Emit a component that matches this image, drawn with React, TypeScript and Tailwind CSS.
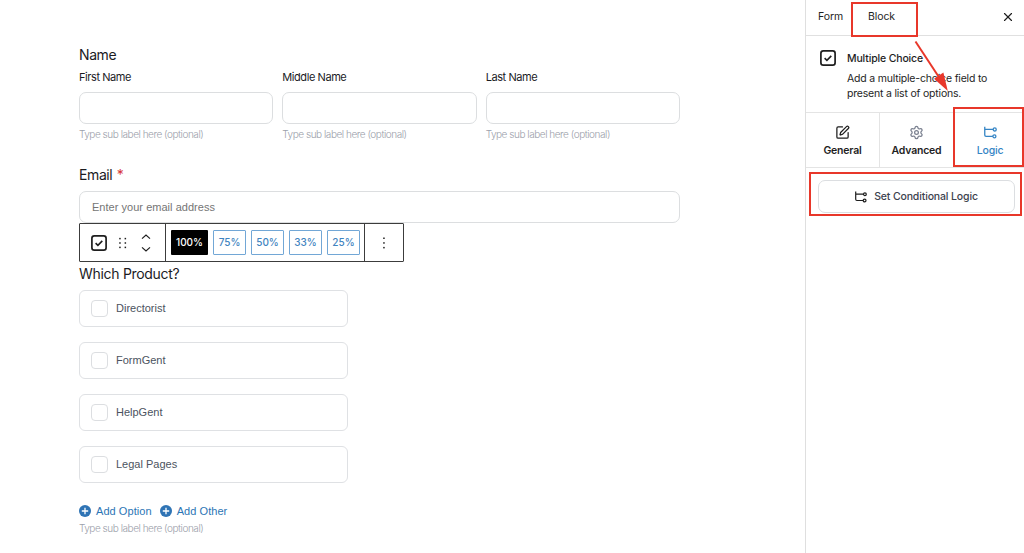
import { useState } from "react"
import { Settings, SquarePen, X } from "lucide-react"

const nameFields = ["First Name", "Middle Name", "Last Name"]
const options = ["Directorist", "FormGent", "HelpGent", "Legal Pages"]
const widths = ["100%", "75%", "50%", "33%", "25%"]

function CheckboxIcon({ className }: { className?: string }) {
  return (
    <svg viewBox="0 0 16 16" fill="none" stroke="currentColor" className={className}>
      <rect x="0.9" y="0.9" width="14.2" height="14.2" rx="2.4" strokeWidth="1.7" />
      <path d="M4.6 8.1l2.3 2.2 4.4-4.4" strokeWidth="1.6" />
    </svg>
  )
}

function LogicIcon({ className }: { className?: string }) {
  return (
    <svg viewBox="0 0 12 12" fill="none" stroke="currentColor" strokeWidth="1.2" className={className}>
      <path d="M0.7 0.6v7.7a1.2 1.2 0 0 0 1.2 1.2h6.3M0.7 3.2h7.7" />
      <circle cx="9.9" cy="3.2" r="1.4" />
      <circle cx="9.6" cy="9.5" r="1.4" />
    </svg>
  )
}

function AddButton({ label }: { label: string }) {
  return (
    <button className="flex items-center gap-[5px] font-['Liberation_Sans',sans-serif] text-[11px] leading-5 tracking-[0.06px] text-[#2b75b5]">
      <svg viewBox="0 0 12 12" className="h-3 w-3">
        <circle cx="6" cy="6" r="6" fill="#2f74b5" />
        <path d="M6 2.8v6.4M2.8 6h6.4" stroke="white" strokeWidth="1.3" />
      </svg>
      {label}
    </button>
  )
}

function SubLabel() {
  return (
    <p className="text-[10px] leading-[14px] font-light tracking-[-0.46px] whitespace-nowrap text-[#9ba0aa]">
      Type sub label here (optional)
    </p>
  )
}

function BlockToolbar() {
  const [width, setWidth] = useState("100%")

  return (
    <div className="flex h-[39px] w-[325px] rounded-[1px] border border-[#3c3c3c] bg-white text-[#1e1e1e]">
      <div className="flex w-[86px] items-center border-r border-[#3c3c3c] pl-[11px]">
        <CheckboxIcon className="h-4 w-4" />
        <svg viewBox="0 0 8 12" className="ml-3 h-3 w-2" fill="currentColor">
          {[1.6, 6, 10.4].map((y) => (
            <g key={y}>
              <rect x="0.2" y={y - 0.75} width="1.5" height="1.5" />
              <rect x="5.6" y={y - 0.75} width="1.5" height="1.5" />
            </g>
          ))}
        </svg>
        <svg viewBox="0 0 10 18" className="ml-[14px] h-[18px] w-2.5" fill="none" stroke="currentColor" strokeWidth="1.2">
          <path d="M1 4.6l4-3.5 4 3.5M1 13.4l4 3.5 4-3.5" />
        </svg>
      </div>
      <div className="flex w-[199px] items-center gap-[5px] border-r border-[#3c3c3c] pl-[5px] font-['Inter',sans-serif] text-[10px] font-medium">
        {widths.map((w) => (
          <button
            key={w}
            onClick={() => setWidth(w)}
            className={
              w === width
                ? "h-[25px] w-[37px] shrink-0 rounded-[1px] bg-black text-white"
                : "h-[25px] w-[33px] shrink-0 rounded-[1px] border border-[#72a7d6] text-[#3f84c0]"
            }
          >
            {w}
          </button>
        ))}
      </div>
      <svg viewBox="0 0 2 12" className="m-auto h-3 w-0.5" fill="currentColor">
        <rect x="0.2" y="0.5" width="1.5" height="1.5" />
        <rect x="0.2" y="5.2" width="1.5" height="1.5" />
        <rect x="0.2" y="9.9" width="1.5" height="1.5" />
      </svg>
    </div>
  )
}

function FormCanvas() {
  return (
    <main className="w-[680px] pt-[45px] pl-[79px] font-['Inter',sans-serif] text-[#1b1b1f]">
      <h2 className="text-[14px] leading-5 tracking-[-0.4px]">Name</h2>
      <div className="mt-0.5 grid grid-cols-3 gap-[9px]">
        {nameFields.map((field) => (
          <div key={field}>
            <p className="text-[11px] leading-5 tracking-[-0.43px]">{field}</p>
            <div className="mt-[5px] mb-[3px] h-8 rounded-[7px] border border-[#dcdee0]" />
            <SubLabel />
          </div>
        ))}
      </div>

      <h2 className="mt-6 text-[14px] leading-5 tracking-[-0.4px]">
        Email <span className="ml-px text-[#d63638]">*</span>
      </h2>
      <div className="mt-1.5 flex h-8 items-center rounded-[7px] border border-[#dcdee0] pl-3 font-['Liberation_Sans',sans-serif] text-[11px] tracking-[0.03px] text-[#757575]">
        Enter your email address
      </div>

      <BlockToolbar />

      <h2 className="mt-0.5 text-[14px] leading-5 tracking-[-0.3px]">Which Product?</h2>
      <div className="mt-[6px] flex w-[269px] flex-col gap-[15px]">
        {options.map((option) => (
          <div key={option} className="flex h-[37px] items-center gap-2 rounded-[6px] border border-[#dfe1e4] pl-[11px]">
            <span className="h-[17px] w-[17px] rounded-[4px] border border-[#dcdee1]" />
            <span className="font-['Liberation_Sans',sans-serif] text-[11px] text-[#4b5360]">{option}</span>
          </div>
        ))}
      </div>
      <div className="mt-[18px] flex gap-2">
        <AddButton label="Add Option" />
        <AddButton label="Add Other" />
      </div>
      <SubLabel />
    </main>
  )
}

function Sidebar() {
  return (
    <aside className="relative w-[219px] border-l border-[#dfdfdf] font-['Inter',sans-serif] text-[#1e1e1e]">
      <div className="flex h-9 items-center border-b border-[#e0e0e0] pr-[9px] pb-px pl-3 text-[10.5px] tracking-[-0.1px]">
        <span className="w-[50px]">Form</span>
        <span>Block</span>
        <X className="ml-auto h-3.5 w-3.5" strokeWidth={2} />
      </div>

      <div className="flex h-[76px] gap-[11px] pt-[14px] pl-[14px]">
        <CheckboxIcon className="h-4 w-4 shrink-0" />
        <div>
          <h3 className="pt-px text-[10.5px] leading-4 font-medium tracking-[-0.15px]">Multiple Choice</h3>
          <p className="mt-[5px] text-[10.5px] leading-[14.5px] tracking-[-0.2px] whitespace-nowrap">
            Add a multiple-choice field to
            <br />
            present a list of options.
          </p>
        </div>
      </div>

      <div className="grid h-14 grid-cols-[74px_73px_1fr] border-y border-[#e4e4e4] text-[10.5px] font-semibold tracking-[-0.2px]">
        <div className="flex flex-col items-center border-r border-[#e4e4e4] pt-3">
          <SquarePen className="h-[15px] w-[15px]" strokeWidth={2} />
          <span className="mt-[3px] leading-4">General</span>
        </div>
        <div className="flex flex-col items-center pt-3">
          <Settings className="h-[15px] w-[15px] text-[#7b8190]" strokeWidth={2} />
          <span className="mt-[3px] leading-4">Advanced</span>
        </div>
        <div className="flex flex-col items-center pt-[13px] pl-[3px] text-[#3585c5]">
          <LogicIcon className="h-[13px] w-[13px]" />
          <span className="mt-1 leading-4 font-medium">Logic</span>
        </div>
      </div>

      <button className="mt-3 ml-3 flex h-[33px] w-[197px] items-center justify-center gap-[7px] rounded-[7px] border border-[#dcdee1] text-[10.5px] font-medium tracking-[-0.14px] text-[#3c424d]">
        <LogicIcon className="h-3 w-3 text-[#1e1e1e]" />
        Set Conditional Logic
      </button>

      {/* annotations drawn over the panel */}
      <div className="absolute top-[2px] left-[45px] h-[35px] w-[67px] border-2 border-[#e8372a]" />
      <div className="absolute top-[107px] left-[147px] h-[60px] w-[71px] border-2 border-[#e8372a]" />
      <div className="absolute top-[172px] left-[3px] h-[44px] w-[213px] border-2 border-[#e8372a]" />
      <svg viewBox="0 0 36 54" className="absolute top-10 left-[107px] h-[54px] w-9" fill="#e8372a">
        <path d="M2.5 1.5L26.5 38" stroke="#e8372a" strokeWidth="2" />
        <path d="M34.8 51L21 38.8l9.4-6.2z" />
      </svg>
    </aside>
  )
}

export default function App() {
  return (
    <div className="flex h-[553px] w-[1024px] justify-between overflow-hidden bg-white">
      <FormCanvas />
      <Sidebar />
    </div>
  )
}
